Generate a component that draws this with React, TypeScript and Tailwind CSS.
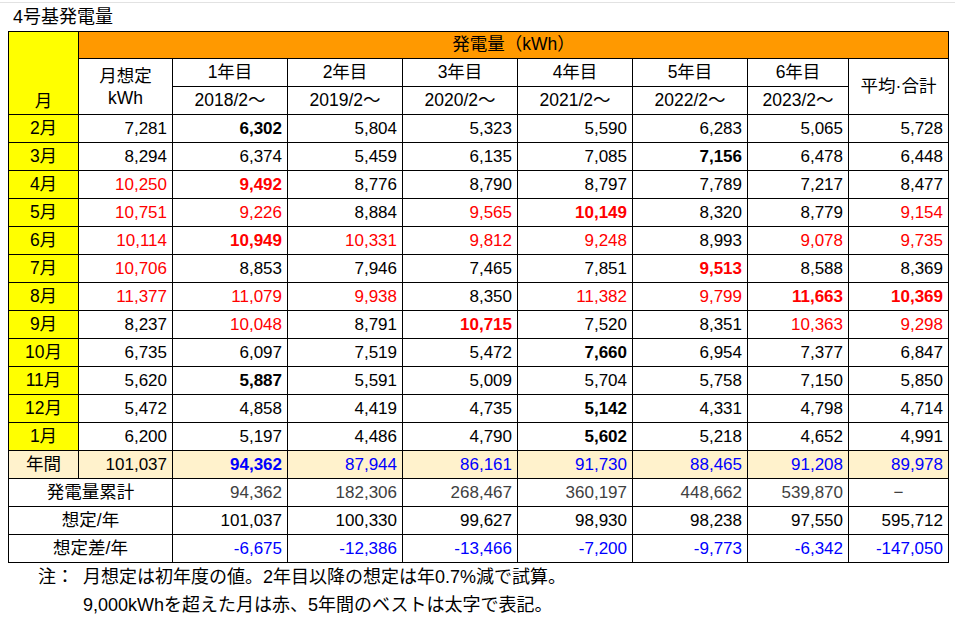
const years = ["1年目", "2年目", "3年目", "4年目", "5年目", "6年目"];
const starts = ["2018/2～", "2019/2～", "2020/2～", "2021/2～", "2022/2～", "2023/2～"];

// "r:" = red, "b:" = bold, "rb:" = red bold
const months: [string, string[]][] = [
  ["2月", ["7,281", "b:6,302", "5,804", "5,323", "5,590", "6,283", "5,065", "5,728"]],
  ["3月", ["8,294", "6,374", "5,459", "6,135", "7,085", "b:7,156", "6,478", "6,448"]],
  ["4月", ["r:10,250", "rb:9,492", "8,776", "8,790", "8,797", "7,789", "7,217", "8,477"]],
  ["5月", ["r:10,751", "r:9,226", "8,884", "r:9,565", "rb:10,149", "8,320", "8,779", "r:9,154"]],
  ["6月", ["r:10,114", "rb:10,949", "r:10,331", "r:9,812", "r:9,248", "8,993", "r:9,078", "r:9,735"]],
  ["7月", ["r:10,706", "8,853", "7,946", "7,465", "7,851", "rb:9,513", "8,588", "8,369"]],
  ["8月", ["r:11,377", "r:11,079", "r:9,938", "8,350", "r:11,382", "r:9,799", "rb:11,663", "rb:10,369"]],
  ["9月", ["8,237", "r:10,048", "8,791", "rb:10,715", "7,520", "8,351", "r:10,363", "r:9,298"]],
  ["10月", ["6,735", "6,097", "7,519", "5,472", "b:7,660", "6,954", "7,377", "6,847"]],
  ["11月", ["5,620", "b:5,887", "5,591", "5,009", "5,704", "5,758", "7,150", "5,850"]],
  ["12月", ["5,472", "4,858", "4,419", "4,735", "b:5,142", "4,331", "4,798", "4,714"]],
  ["1月", ["6,200", "5,197", "4,486", "4,790", "b:5,602", "5,218", "4,652", "4,991"]],
];

const annual = ["94,362", "87,944", "86,161", "91,730", "88,465", "91,208", "89,978"];
const cumulative = ["94,362", "182,306", "268,467", "360,197", "448,662", "539,870"];
const planned = ["101,037", "100,330", "99,627", "98,930", "98,238", "97,550", "595,712"];
const diff = ["-6,675", "-12,386", "-13,466", "-7,200", "-9,773", "-6,342", "-147,050"];

const Num = ({ v, className = "" }: { v: string; className?: string }) => {
  const [flag, text] = v.includes(":") ? v.split(":") : ["", v];
  const red = flag.includes("r");
  const bold = flag.includes("b");
  return (
    <div
      className={`flex items-center justify-end pr-[5px] ${red ? "text-[#ff0000]" : ""} ${
        bold ? "font-bold" : ""
      } ${className || "bg-white"}`}
    >
      {text}
    </div>
  );
};

const Center = ({ children, className = "" }: { children: React.ReactNode; className?: string }) => (
  <div className={`flex items-center justify-center ${className || "bg-white"}`}>{children}</div>
);

export default function App() {
  return (
    <div className="relative h-[620px] w-[955px] overflow-hidden bg-white font-['Liberation_Sans','Noto_Sans_CJK_JP',sans-serif] text-[17px] text-black">
      <div className="h-[3px] border-b border-[#e2e2e2]" />
      <div className="flex h-[28px] items-center pl-[13px] text-[18px]">4号基発電量</div>

      <div className="ml-[8px] grid w-[941px] grid-cols-[69px_93px_114px_114px_114px_114px_114px_100px_99px] grid-rows-[26px_repeat(18,27px)] gap-px border border-black bg-black leading-none">
        {/* header */}
        <div className="row-span-3 flex items-end justify-center bg-[#ffff00] pb-[4px] text-[17.5px]">月</div>
        <Center className="col-span-8 bg-[#ff9900] text-[17.5px]">発電量（kWh）</Center>
        <div className="row-span-2 flex flex-col items-center justify-center bg-white text-[17.5px] leading-[22px]">
          <span>月想定</span>
          <span>kWh</span>
        </div>
        {years.map((y) => (
          <Center key={y} className="bg-white text-[17.5px]">
            {y}
          </Center>
        ))}
        <Center className="row-span-2 bg-white text-[17.5px]">平均·合計</Center>
        {starts.map((s) => (
          <Center key={s} className="bg-white text-[17.5px]">
            {s}
          </Center>
        ))}

        {/* months */}
        {months.map(([m, vals]) => (
          <div key={m} className="contents">
            <Center className="bg-[#ffff00] text-[17.5px]">{m}</Center>
            {vals.map((v, i) => (
              <Num key={i} v={v} />
            ))}
          </div>
        ))}

        {/* annual */}
        <Center className="bg-[#fff2cc] text-[17.5px]">年間</Center>
        <Num v="101,037" className="bg-[#fff2cc]" />
        {annual.map((v, i) => (
          <Num key={i} v={v} className={`bg-[#fff2cc] text-[#0000ff] ${i === 0 ? "font-bold" : ""}`} />
        ))}

        <Center className="col-span-2 bg-white text-[17.5px]">発電量累計</Center>
        {cumulative.map((v, i) => (
          <Num key={i} v={v} className="bg-white text-[#404040]" />
        ))}
        <Center className="bg-white text-[#404040]">−</Center>

        <Center className="col-span-2 bg-white text-[17.5px]">想定/年</Center>
        {planned.map((v, i) => (
          <Num key={i} v={v} />
        ))}

        <Center className="col-span-2 bg-white text-[17.5px]">想定差/年</Center>
        {diff.map((v, i) => (
          <Num key={i} v={v} className="bg-white text-[#0000ff]" />
        ))}
      </div>

      <div className="flex h-[28px] items-center text-[18px]">
        <span className="ml-[38px] w-[45px]">注：</span>
        <span>月想定は初年度の値。2年目以降の想定は年0.7%減で試算。</span>
      </div>
      <div className="flex h-[28px] items-center pl-[83px] text-[18px]">
        9,000kWhを超えた月は赤、5年間のベストは太字で表記。
      </div>
    </div>
  );
}
